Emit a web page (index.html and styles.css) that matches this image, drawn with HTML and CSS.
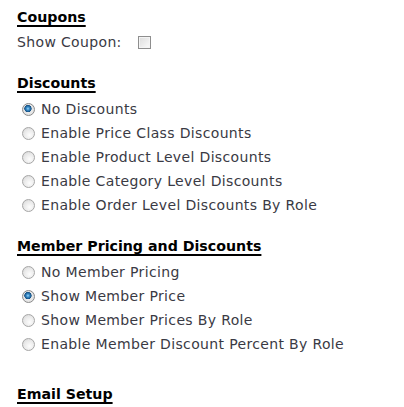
FILE: index.html
```html
<!DOCTYPE html>
<html>
<head>
<meta charset="utf-8">
<link rel="stylesheet" href="styles.css">
</head>
<body>
<div class="page">
  <section class="group first">
    <h2 class="title">Coupons</h2>
    <div class="field">
      <span>Show Coupon:</span>
      <span class="check"></span>
    </div>
  </section>
  <section class="group">
    <h2 class="title">Discounts</h2>
    <ul class="options">
      <li><span class="radio on"></span>No Discounts</li>
      <li><span class="radio"></span>Enable Price Class Discounts</li>
      <li><span class="radio"></span>Enable Product Level Discounts</li>
      <li><span class="radio"></span>Enable Category Level Discounts</li>
      <li><span class="radio"></span>Enable Order Level Discounts By Role</li>
    </ul>
  </section>
  <section class="group">
    <h2 class="title">Member Pricing and Discounts</h2>
    <ul class="options">
      <li><span class="radio"></span>No Member Pricing</li>
      <li><span class="radio on"></span>Show Member Price</li>
      <li><span class="radio"></span>Show Member Prices By Role</li>
      <li><span class="radio"></span>Enable Member Discount Percent By Role</li>
    </ul>
  </section>
  <section class="group email">
    <h2 class="title">Email Setup</h2>
    <div class="field"><span class="req">*</span> Server/Tell</div>
  </section>
</div>
</body>
</html>
```
FILE: styles.css
```css
html, body {
  margin: 0;
  padding: 0;
  background: #fff;
}
body {
  font-family: "DejaVu Sans", Verdana, sans-serif;
  font-size: 14px;
  letter-spacing: 0.35px;
  color: #3a3a44;
  overflow: hidden;
  height: 407px;
}
.page {
  padding: 8px 0 0 17px;
}
.group {
  margin-top: 20px;
}
.group.first {
  margin-top: 0;
}
.group.email {
  margin-top: 29px;
}
.title {
  margin: 0 0 5px;
  font-size: 14.2px;
  letter-spacing: 0;
  line-height: 18px;
  font-weight: bold;
  color: #000;
  text-decoration: underline;
  text-decoration-thickness: 2px;
  text-underline-offset: 3px;
}
.field {
  display: flex;
  align-items: center;
  height: 24px;
  margin-top: -1px;
}
.check {
  display: inline-block;
  width: 11px;
  height: 11px;
  margin-left: 16px;
  border: 1px solid #8e8e8e;
  background: linear-gradient(135deg, #dcdcdc, #fbfbfb);
  box-shadow: inset 0 0 0 1px #f4f4f4;
}
.options {
  list-style: none;
  margin: 0;
  padding: 0 0 0 5px;
}
.options li {
  display: flex;
  align-items: center;
  height: 24px;
}
.radio {
  display: inline-block;
  box-sizing: border-box;
  width: 13px;
  height: 13px;
  margin-right: 6px;
  border-radius: 50%;
  border: 1px solid #a6a6a6;
  background: radial-gradient(circle at 60% 65%, #fdfdfd 0, #e9e9e9 55%, #d2d2d2 100%);
}
.radio.on {
  border-color: #8a8a8a;
  background:
    radial-gradient(circle at 45% 42%, #9fd6f6 0, #3b8fcc 1.5px, #154f82 3.4px, transparent 3.9px),
    radial-gradient(circle, #f2f2f2 0, #dcdcdc 100%);
}
.req {
  color: #e04040;
  margin-right: 2px;
}
```
